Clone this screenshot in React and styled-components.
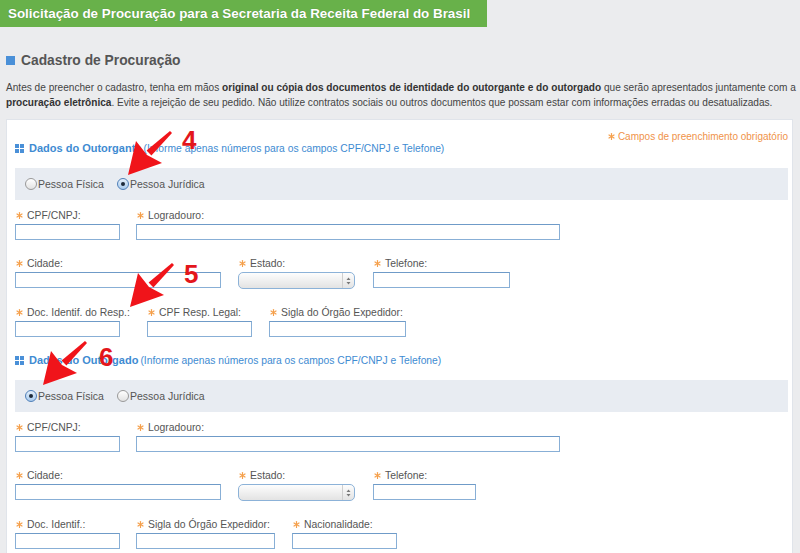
import React from 'react';
import styled, { createGlobalStyle } from 'styled-components';

const GlobalStyle = createGlobalStyle`
    body {
        margin: 0;
        background: #ebecee;
        font-family: "Liberation Sans", Arial, sans-serif;
    }
`

const Page = styled.div`
    position: relative;
    height: 553px;
    overflow: hidden;
`

const HeaderBar = styled.div`
    width: 487px;
    height: 27px;
    box-sizing: border-box;
    padding-left: 8px;
    display: flex;
    align-items: center;
    background-color: #68b14a;
    color: #fff;
    font-weight: bold;
    font-size: 13.4px;
    text-shadow: 0 0 1px rgba(0, 0, 0, 0.25);
`

const Main = styled.div`
    padding: 0 7px 0 6px;
`

const Title = styled.h1`
    margin: 25px 0 0 0;
    height: 16px;
    display: flex;
    align-items: center;
    gap: 6px;
    font-size: 13.8px;
    color: #555;
`

const TitleSquare = styled.span`
    width: 9px;
    height: 9px;
    background-color: #4a90d8;
`

const Intro = styled.p`
    margin: 12px 0 0 0;
    font-size: 10.1px;
    line-height: 15px;
    color: #444;
    white-space: nowrap;
    b {
        color: #333;
    }
`

const Panel = styled.div`
    margin-top: 9px;
    background-color: #fff;
    border: 1px solid #e0e4ea;
    padding: 10px 4px 30px 8px;
`

const Note = styled.div`
    display: flex;
    justify-content: flex-end;
    align-items: center;
    gap: 3px;
    height: 12px;
    font-size: 10px;
    color: #f0934a;
`

const SectionHeader = styled.div`
    margin-top: ${props => props.top || 0}px;
    height: 12px;
    display: flex;
    align-items: center;
    gap: 5px;
    color: #3e8bd2;
`

const SectionTitle = styled.span`
    font-weight: bold;
    font-size: 11px;
`

const SectionHint = styled.span`
    font-size: 10.3px;
    margin-left: -3px;
`

const Band = styled.div`
    margin-top: 14px;
    height: 32px;
    display: flex;
    align-items: center;
    gap: 13px;
    padding-left: 10px;
    background-color: #e8ecf2;
`

const RadioOption = styled.label`
    display: flex;
    align-items: center;
    gap: 1px;
    font-size: 10.5px;
    color: #555;
`

const RadioDot = styled.span`
    width: 12px;
    height: 12px;
    box-sizing: border-box;
    border-radius: 50%;
    display: flex;
    align-items: center;
    justify-content: center;
    border: 1px solid ${props => props.checked ? "#4f7fb8" : "#999"};
    background: ${props => props.checked
        ? "linear-gradient(#e4effa, #a9cbee)"
        : "linear-gradient(#fff, #e2e2e2)"};
    &::after {
        content: "";
        display: ${props => props.checked ? "block" : "none"};
        width: 4px;
        height: 4px;
        border-radius: 50%;
        background-color: #1d2a3a;
    }
`

const Rows = styled.div`
    padding-top: 8px;
    display: flex;
    flex-direction: column;
    gap: 16px;
`

const Row = styled.div`
    display: flex;
`

const Field = styled.div`
    flex: none;
    width: ${props => props.w ? props.w + "px" : "auto"};
`

const Label = styled.div`
    height: 14px;
    margin-bottom: 2px;
    display: flex;
    align-items: center;
    gap: 4px;
    padding-left: 1px;
    font-size: 10.4px;
    color: #555;
    white-space: nowrap;
`

const TextInput = styled.input`
    display: block;
    box-sizing: border-box;
    margin: 0;
    padding: 0 3px;
    width: ${props => props.w}px;
    height: 16px;
    border: 1px solid #88afd6;
    border-top-color: #6f9bc8;
    background-color: #fff;
    outline: none;
`

const SelectBox = styled.div`
    box-sizing: border-box;
    width: ${props => props.w}px;
    height: 17px;
    border: 1px solid #8cb2d8;
    border-radius: 5px;
    background: linear-gradient(#fdfdfd, #e3e3e3);
    display: flex;
    justify-content: flex-end;
`

const SelectArrows = styled.span`
    width: 11px;
    border-left: 1px solid #cfcfcf;
    display: flex;
    align-items: center;
    justify-content: center;
`

const Callout = styled.span`
    position: absolute;
    left: ${props => props.x}px;
    top: ${props => props.y}px;
    font-family: "Liberation Sans", Arial, sans-serif;
    font-weight: bold;
    font-size: 26px;
    line-height: 1;
    color: #e3161c;
`

const ArrowSvg = styled.svg`
    position: absolute;
    left: ${props => props.x}px;
    top: ${props => props.y}px;
`

const Star = () => (
    <svg width="7" height="7" viewBox="0 0 7 7">
        <g stroke="#f5a04c" strokeWidth="1.2" strokeLinecap="round">
            <line x1="3.5" y1="0.6" x2="3.5" y2="6.4" />
            <line x1="1" y1="2" x2="6" y2="5" />
            <line x1="1" y1="5" x2="6" y2="2" />
        </g>
    </svg>
)

const GridIcon = () => (
    <svg width="9" height="9" viewBox="0 0 9 9">
        <g fill="#4a90d8">
            <rect x="0" y="0" width="4" height="4" />
            <rect x="5" y="0" width="4" height="4" />
            <rect x="0" y="5" width="4" height="4" />
            <rect x="5" y="5" width="4" height="4" />
        </g>
    </svg>
)

const Arrow = ({ x, y }) => (
    <ArrowSvg x={x} y={y} width="48" height="48" viewBox="0 0 48 48">
        <polygon points="43,1.9 45,4.1 24.4,26.5 19.6,21.5" fill="#f0141a" />
        <polygon points="1,46 9,12 20,26 35,34" fill="#f0141a" />
    </ArrowSvg>
)

const FormField = ({ label, w, input, select }) => (
    <Field w={w}>
        <Label><Star />{label}</Label>
        {select
            ? <SelectBox w={select}>
                <SelectArrows>
                    <svg width="5" height="8" viewBox="0 0 5 8">
                        <polygon points="2.5,0.5 4.5,3 0.5,3" fill="#777" />
                        <polygon points="2.5,7.5 4.5,5 0.5,5" fill="#777" />
                    </svg>
                </SelectArrows>
            </SelectBox>
            : <TextInput type="text" w={input} readOnly />}
    </Field>
)

const Radios = ({ selected }) => (
    <Band>
        <RadioOption><RadioDot checked={selected === 'F'} />Pessoa Física</RadioOption>
        <RadioOption><RadioDot checked={selected === 'J'} />Pessoa Jurídica</RadioOption>
    </Band>
)

const hint = "(Informe apenas números para os campos CPF/CNPJ e Telefone)";

const App = () => {
    return (
        <Page>
            <GlobalStyle />
            <HeaderBar>Solicitação de Procuração para a Secretaria da Receita Federal do Brasil</HeaderBar>
            <Main>
                <Title><TitleSquare />Cadastro de Procuração</Title>
                <Intro>
                    Antes de preencher o cadastro, tenha em mãos <b>original ou cópia dos documentos de identidade do outorgante e do outorgado</b> que serão apresentados juntamente com a
                    <br />
                    <b>procuração eletrônica</b>. Evite a rejeição de seu pedido. Não utilize contratos sociais ou outros documentos que possam estar com informações erradas ou desatualizadas.
                </Intro>
                <Panel>
                    <Note><Star />Campos de preenchimento obrigatório</Note>

                    <SectionHeader>
                        <GridIcon />
                        <SectionTitle>Dados do Outorgante</SectionTitle>
                        <SectionHint>{hint}</SectionHint>
                    </SectionHeader>
                    <Radios selected="J" />
                    <Rows>
                        <Row>
                            <FormField label="CPF/CNPJ:" w={121} input={105} />
                            <FormField label="Logradouro:" input={424} />
                        </Row>
                        <Row>
                            <FormField label="Cidade:" w={223} input={206} />
                            <FormField label="Estado:" w={135} select={117} />
                            <FormField label="Telefone:" input={137} />
                        </Row>
                        <Row>
                            <FormField label="Doc. Identif. do Resp.:" w={132} input={105} />
                            <FormField label="CPF Resp. Legal:" w={122} input={105} />
                            <FormField label="Sigla do Órgão Expedidor:" input={137} />
                        </Row>
                    </Rows>

                    <SectionHeader top={17}>
                        <GridIcon />
                        <SectionTitle>Dados do Outorgado</SectionTitle>
                        <SectionHint>{hint}</SectionHint>
                    </SectionHeader>
                    <Radios selected="F" />
                    <Rows>
                        <Row>
                            <FormField label="CPF/CNPJ:" w={121} input={105} />
                            <FormField label="Logradouro:" input={424} />
                        </Row>
                        <Row>
                            <FormField label="Cidade:" w={223} input={206} />
                            <FormField label="Estado:" w={135} select={117} />
                            <FormField label="Telefone:" input={103} />
                        </Row>
                        <Row>
                            <FormField label="Doc. Identif.:" w={121} input={105} />
                            <FormField label="Sigla do Órgão Expedidor:" w={156} input={139} />
                            <FormField label="Nacionalidade:" input={105} />
                        </Row>
                    </Rows>
                </Panel>
            </Main>

            <Arrow x={127} y={129} />
            <Callout x={182} y={127}>4</Callout>
            <Arrow x={129} y={261} />
            <Callout x={184} y={261}>5</Callout>
            <Arrow x={42} y={339} />
            <Callout x={99} y={344}>6</Callout>
        </Page>
    );
}

export default App;
